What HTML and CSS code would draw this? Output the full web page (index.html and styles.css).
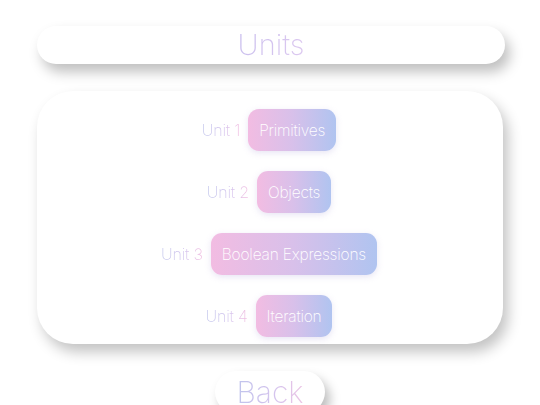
FILE: index.html
```html
<!DOCTYPE html>
<html>
<head>
<meta charset="utf-8">
<link rel="stylesheet" href="styles.css">
</head>
<body>
<div class="page">
  <header class="title-bar"><span class="grad-text title">Units</span></header>
  <main class="card">
    <div class="row"><span class="grad-text label">Unit 1</span><button class="unit-btn">Primitives</button></div>
    <div class="row"><span class="grad-text label">Unit 2</span><button class="unit-btn">Objects</button></div>
    <div class="row"><span class="grad-text label">Unit 3</span><button class="unit-btn">Boolean Expressions</button></div>
    <div class="row"><span class="grad-text label">Unit 4</span><button class="unit-btn">Iteration</button></div>
  </main>
  <button class="back-btn"><span class="grad-text back">Back</span></button>
</div>
</body>
</html>
```
FILE: styles.css
```css
html, body {
  margin: 0;
  padding: 0;
  background: #ffffff;
  overflow: hidden;
  height: 405px;
}
body {
  font-family: "Inter", "Lato", sans-serif;
  font-weight: 200;
}
.page {
  display: flex;
  flex-direction: column;
  align-items: center;
  padding-top: 26px;
}
.title-bar {
  box-sizing: border-box;
  width: 468px;
  height: 38px;
  border-radius: 19px;
  background: #fff;
  box-shadow: 5px 8px 13px rgba(0,0,0,0.25);
  display: flex;
  align-items: center;
  justify-content: center;
  margin-left: 2px;
}
.grad-text {
  -webkit-background-clip: text;
  background-clip: text;
  color: transparent;
}
.title {
  font-size: 29px;
  line-height: 38px;
  font-weight: 200;
  background: linear-gradient(90deg, #cbc0ee, #dcc8f0);
  -webkit-background-clip: text;
  background-clip: text;
}
.card {
  box-sizing: border-box;
  width: 466px;
  height: 253px;
  margin-top: 27px;
  border-radius: 36px;
  background: #fff;
  box-shadow: 5px 8px 14px rgba(0,0,0,0.24);
  display: flex;
  flex-direction: column;
  align-items: center;
  padding-top: 18px;
  gap: 20px;
}
.row {
  display: flex;
  align-items: center;
  gap: 8px;
  margin-left: -2px;
}
.label {
  font-size: 16px;
  font-weight: 200;
  letter-spacing: -0.2px;
  background: linear-gradient(90deg, #c2c6ec 0%, #d3c4ee 55%, #f2bce0 100%);
  -webkit-background-clip: text;
  background-clip: text;
}
.unit-btn {
  font-family: inherit;
  font-weight: 200;
  font-size: 15.5px;
  letter-spacing: -0.2px;
  color: #fff;
  border: none;
  height: 42px;
  padding: 0 11px;
  border-radius: 11px;
  background: linear-gradient(90deg, #f2bce2 0%, #d8c0ea 50%, #b0c4f0 100%);
  box-shadow: 0 2px 6px rgba(180,170,220,0.3);
}
.back-btn {
  font-family: inherit;
  width: 110px;
  height: 42px;
  margin-top: 27px;
  border: none;
  border-radius: 21px;
  background: #fff;
  box-shadow: 5px 7px 11px rgba(0,0,0,0.26);
  padding: 0;
  display: flex;
  align-items: center;
  justify-content: center;
}
.back {
  font-size: 30px;
  font-weight: 200;
  line-height: 42px;
  background: linear-gradient(90deg, #c0c4ec 0%, #d6c4ee 60%, #ecc4e4 100%);
  -webkit-background-clip: text;
  background-clip: text;
}
```
